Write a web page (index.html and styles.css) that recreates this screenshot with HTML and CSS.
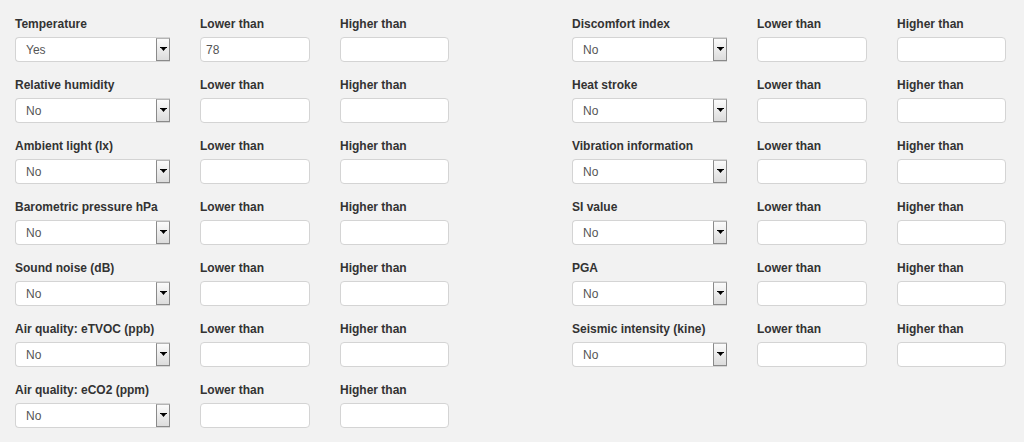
FILE: index.html
```html
<!DOCTYPE html>
<html>
<head>
<meta charset="utf-8">
<link rel="stylesheet" href="styles.css">
</head>
<body>
<div class="page">
  <div class="col">
    <div class="row">
      <div class="field sel"><label>Temperature</label><div class="select"><span>Yes</span><i class="btn"><svg width="7" height="5" viewBox="0 0 7 5"><path d="M0 0h7v1H0zM1 1h5L3.5 4z" fill="#000"/></svg></i></div></div>
      <div class="field in1"><label>Lower than</label><div class="input">78</div></div>
      <div class="field in2"><label>Higher than</label><div class="input"></div></div>
    </div>
    <div class="row">
      <div class="field sel"><label>Relative humidity</label><div class="select"><span>No</span><i class="btn"><svg width="7" height="5" viewBox="0 0 7 5"><path d="M0 0h7v1H0zM1 1h5L3.5 4z" fill="#000"/></svg></i></div></div>
      <div class="field in1"><label>Lower than</label><div class="input"></div></div>
      <div class="field in2"><label>Higher than</label><div class="input"></div></div>
    </div>
    <div class="row">
      <div class="field sel"><label>Ambient light (lx)</label><div class="select"><span>No</span><i class="btn"><svg width="7" height="5" viewBox="0 0 7 5"><path d="M0 0h7v1H0zM1 1h5L3.5 4z" fill="#000"/></svg></i></div></div>
      <div class="field in1"><label>Lower than</label><div class="input"></div></div>
      <div class="field in2"><label>Higher than</label><div class="input"></div></div>
    </div>
    <div class="row">
      <div class="field sel"><label>Barometric pressure hPa</label><div class="select"><span>No</span><i class="btn"><svg width="7" height="5" viewBox="0 0 7 5"><path d="M0 0h7v1H0zM1 1h5L3.5 4z" fill="#000"/></svg></i></div></div>
      <div class="field in1"><label>Lower than</label><div class="input"></div></div>
      <div class="field in2"><label>Higher than</label><div class="input"></div></div>
    </div>
    <div class="row">
      <div class="field sel"><label>Sound noise (dB)</label><div class="select"><span>No</span><i class="btn"><svg width="7" height="5" viewBox="0 0 7 5"><path d="M0 0h7v1H0zM1 1h5L3.5 4z" fill="#000"/></svg></i></div></div>
      <div class="field in1"><label>Lower than</label><div class="input"></div></div>
      <div class="field in2"><label>Higher than</label><div class="input"></div></div>
    </div>
    <div class="row">
      <div class="field sel"><label>Air quality: eTVOC (ppb)</label><div class="select"><span>No</span><i class="btn"><svg width="7" height="5" viewBox="0 0 7 5"><path d="M0 0h7v1H0zM1 1h5L3.5 4z" fill="#000"/></svg></i></div></div>
      <div class="field in1"><label>Lower than</label><div class="input"></div></div>
      <div class="field in2"><label>Higher than</label><div class="input"></div></div>
    </div>
    <div class="row">
      <div class="field sel"><label>Air quality: eCO2 (ppm)</label><div class="select"><span>No</span><i class="btn"><svg width="7" height="5" viewBox="0 0 7 5"><path d="M0 0h7v1H0zM1 1h5L3.5 4z" fill="#000"/></svg></i></div></div>
      <div class="field in1"><label>Lower than</label><div class="input"></div></div>
      <div class="field in2"><label>Higher than</label><div class="input"></div></div>
    </div>
  </div>
  <div class="col right">
    <div class="row">
      <div class="field sel"><label>Discomfort index</label><div class="select"><span>No</span><i class="btn"><svg width="7" height="5" viewBox="0 0 7 5"><path d="M0 0h7v1H0zM1 1h5L3.5 4z" fill="#000"/></svg></i></div></div>
      <div class="field in1"><label>Lower than</label><div class="input"></div></div>
      <div class="field in2"><label>Higher than</label><div class="input"></div></div>
    </div>
    <div class="row">
      <div class="field sel"><label>Heat stroke</label><div class="select"><span>No</span><i class="btn"><svg width="7" height="5" viewBox="0 0 7 5"><path d="M0 0h7v1H0zM1 1h5L3.5 4z" fill="#000"/></svg></i></div></div>
      <div class="field in1"><label>Lower than</label><div class="input"></div></div>
      <div class="field in2"><label>Higher than</label><div class="input"></div></div>
    </div>
    <div class="row">
      <div class="field sel"><label>Vibration information</label><div class="select"><span>No</span><i class="btn"><svg width="7" height="5" viewBox="0 0 7 5"><path d="M0 0h7v1H0zM1 1h5L3.5 4z" fill="#000"/></svg></i></div></div>
      <div class="field in1"><label>Lower than</label><div class="input"></div></div>
      <div class="field in2"><label>Higher than</label><div class="input"></div></div>
    </div>
    <div class="row">
      <div class="field sel"><label>SI value</label><div class="select"><span>No</span><i class="btn"><svg width="7" height="5" viewBox="0 0 7 5"><path d="M0 0h7v1H0zM1 1h5L3.5 4z" fill="#000"/></svg></i></div></div>
      <div class="field in1"><label>Lower than</label><div class="input"></div></div>
      <div class="field in2"><label>Higher than</label><div class="input"></div></div>
    </div>
    <div class="row">
      <div class="field sel"><label>PGA</label><div class="select"><span>No</span><i class="btn"><svg width="7" height="5" viewBox="0 0 7 5"><path d="M0 0h7v1H0zM1 1h5L3.5 4z" fill="#000"/></svg></i></div></div>
      <div class="field in1"><label>Lower than</label><div class="input"></div></div>
      <div class="field in2"><label>Higher than</label><div class="input"></div></div>
    </div>
    <div class="row">
      <div class="field sel"><label>Seismic intensity (kine)</label><div class="select"><span>No</span><i class="btn"><svg width="7" height="5" viewBox="0 0 7 5"><path d="M0 0h7v1H0zM1 1h5L3.5 4z" fill="#000"/></svg></i></div></div>
      <div class="field in1"><label>Lower than</label><div class="input"></div></div>
      <div class="field in2"><label>Higher than</label><div class="input"></div></div>
    </div>
  </div>
</div>
</body>
</html>
```
FILE: styles.css
```css
html, body {
  margin: 0;
  padding: 0;
  background: #f2f2f2;
  font-family: "Liberation Sans", Arial, sans-serif;
  color: #333;
}
.page {
  display: flex;
  padding: 16px 0 0 15px;
  gap: 123px;
}
.col {
  display: flex;
  flex-direction: column;
  gap: 15px;
}
.row {
  display: flex;
  gap: 30px;
}
.field {
  display: flex;
  flex-direction: column;
}
.sel { width: 155px; }
.in1 { width: 110px; }
.in2 { width: 109px; }
label {
  display: block;
  font-size: 12px;
  font-weight: bold;
  line-height: 17px;
  height: 17px;
  margin-bottom: 4px;
  white-space: nowrap;
}
.select, .input {
  box-sizing: border-box;
  height: 25px;
  background: #fff;
  border: 1px solid #d4d4d4;
  border-radius: 4px;
  font-size: 12px;
  color: #555;
  line-height: 24px;
}
.select {
  display: flex;
  align-items: stretch;
  justify-content: space-between;
  padding-left: 10px;
  border-right: none;
  border-radius: 4px 0 0 4px;
}
.input {
  padding-left: 5px;
}
.btn {
  box-sizing: border-box;
  width: 14px;
  border: 1px solid #8a8a8a;
  border-top-color: #b5b5b5;
  background: linear-gradient(#fbfbfb, #dcdcdc);
  display: flex;
  align-items: center;
  justify-content: center;
}
.btn svg { display: block; margin-top: -1px; }
```
